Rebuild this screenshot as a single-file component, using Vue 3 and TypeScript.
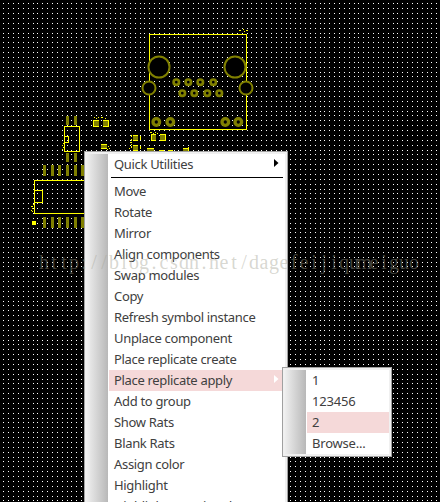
<script setup lang="ts">
interface MenuItem {
  label: string
  arrow?: boolean
  active?: boolean
  separated?: boolean
}

const items: MenuItem[] = [
  { label: 'Quick Utilities', arrow: true, separated: true },
  { label: 'Move' },
  { label: 'Rotate' },
  { label: 'Mirror' },
  { label: 'Align components' },
  { label: 'Swap modules' },
  { label: 'Copy' },
  { label: 'Refresh symbol instance' },
  { label: 'Unplace component' },
  { label: 'Place replicate create' },
  { label: 'Place replicate apply', arrow: true, active: true },
  { label: 'Add to group' },
  { label: 'Show Rats' },
  { label: 'Blank Rats' },
  { label: 'Assign color' },
  { label: 'Highlight' },
  { label: 'Highlight associated' },
]

const subItems: MenuItem[] = [
  { label: '1' },
  { label: '123456' },
  { label: '2', active: true },
  { label: 'Browse...' },
]

// Grid dots snap to whole pixels
const steps = (n: number, pitch: number) => Array.from({ length: n }, (_, i) => Math.floor(3.85 + i * pitch))
const xs = steps(90, 4.865)
const ys = steps(103, 4.873)
const dots = ys.map((y) => xs.map((x) => `M${x} ${y}h1v1h-1z`).join('')).join('')

const pins = [
  [176, 82], [188, 82], [200, 82], [213, 82],
  [182, 93], [194, 93], [207, 93], [219, 93],
]
const shieldPins = [[156, 122], [170, 122], [225, 122], [238, 122]]
const icPins = [43, 51, 58, 66, 74, 81]
const chips = [
  [93, 120, 6, 7], [103, 120, 6, 7], [151, 134, 5, 7], [160, 134, 6, 7],
  [133, 135, 5, 6], [133, 145, 5, 6], [101, 144, 6, 5], [147, 148, 7, 5], [183, 148, 6, 5],
]
const watermark = 'http://blog.csdn.net/dagefeijiqumeiguo'
const watermarkX = watermark.split('').map((_, i) => 44 + i * 10).join(' ')
</script>

<template>
  <main class="canvas">
    <svg class="board" width="440" height="502" viewBox="0 0 440 502">
      <path :d="dots" fill="#fff" shape-rendering="crispEdges" />
      <g fill="none" stroke="#ff0" shape-rendering="crispEdges">
        <rect x="149.5" y="34.5" width="97" height="95" />
        <path d="M64.5 126.5h15v25h-15zM65 136.500h3v6h-3M84 180.500H34.500v33H84M34.500 190.500h8v12h-8" />
      </g>
      <g fill="#000" stroke="#808000" stroke-width="2">
        <circle cx="159" cy="67" r="10.500" />
        <circle cx="235" cy="67" r="10.500" />
        <circle cx="149" cy="88" r="6.500" />
        <circle cx="246" cy="88" r="6.500" />
      </g>
      <g fill="#000" stroke="#808000">
        <circle v-for="p in pins" :key="p.join()" :cx="p[0] + 0.3" :cy="p[1] + 0.2" r="2.700" stroke-width="2.700" />
        <circle v-for="p in shieldPins" :key="p.join()" :cx="p[0] + 0.3" :cy="p[1]" r="3.300" stroke-width="3.300" />
      </g>
      <g fill="#808000" shape-rendering="crispEdges">
        <rect v-for="x in [66, 74]" :key="x" :x="x" y="116" width="3" height="9" />
        <rect v-for="x in [66, 74]" :key="x + 100" :x="x" y="153" width="3" height="9" />
        <rect v-for="x in icPins" :key="x" :x="x" y="165" width="3" height="11" />
        <rect v-for="x in icPins" :key="x + 100" :x="x" y="217" width="3" height="11" />
        <g v-for="c in chips" :key="c.join()">
          <rect :x="c[0]" :y="c[1]" :width="c[2]" :height="c[3]" />
          <path :d="`M${c[0]} ${c[1] + 0.5}h${c[2]}M${c[0]} ${c[1] + c[3] - 0.5}h${c[2]}`" stroke="#ff0" />
        </g>
      </g>
      <g fill="none" stroke="#ff0" shape-rendering="crispEdges">
        <path d="M93.500 120v7M108.500 120v7M151.500 134v7M165.500 134v7M140.500 136v4M140.500 146v3M131.500 135v2M131.500 139v2M131.500 146v2M159 150.500h5M168 150.500h5M188.500 147v4" />
        <path d="M239 30.500h2M243 29.500h1M244 31.500h1M246 30.500h2M94 117.500h1M96 118.500h1M98 117.500h1M101 117.500h2M105 118.500h1M150 132.500h2M153 133.500h1M155 132.500h1M157 133.500h1M108 146.500h1M109 148.500h1M107 149.500h1M130 142.500h2M131 144.500h1M129 148.500h1M63 143.500h1M62 145.500h1M63 147.500h1M62 149.500h1M33 204.500h1M31 206.500h2M32 208.500h1M31 210.500h1M32 211.500h1" />
      </g>
      <rect x="32" y="221" width="4" height="4" fill="#ff0" />
    </svg>

    <nav class="menu main-menu">
      <div class="gutter" />
      <ul class="list">
        <li v-for="item in items" :key="item.label" :class="{ separated: item.separated }">
          <div class="row" :class="{ active: item.active }">
            <span>{{ item.label }}</span>
            <svg v-if="item.arrow" class="arrow" width="5" height="8" viewBox="0 0 5 8"><path d="M0 0l4.500 4L0 8z" /></svg>
          </div>
        </li>
      </ul>
    </nav>

    <nav class="menu sub-menu">
      <div class="gutter" />
      <ul class="list">
        <li v-for="item in subItems" :key="item.label">
          <div class="row" :class="{ active: item.active }"><span>{{ item.label }}</span></div>
        </li>
      </ul>
    </nav>

    <svg class="watermark" width="440" height="40" viewBox="0 0 440 40">
      <text :x="watermarkX" y="29">{{ watermark }}</text>
    </svg>
  </main>
</template>

<style>
body {
  background: #000;
  overflow: hidden;
}
</style>

<style scoped>
.canvas {
  position: relative;
  width: 440px;
  height: 502px;
  overflow: hidden;
  background: #000;
  font-family: 'Noto Sans', sans-serif;
}
.board {
  display: block;
}
.menu {
  position: absolute;
  box-sizing: border-box;
  display: flex;
  padding: 2px;
  border: 1px solid #a0a0a0;
  background: #f0f0f0;
}
.main-menu {
  left: 84px;
  top: 151px;
  width: 204px;
  height: 380px;
}
.sub-menu {
  left: 282px;
  top: 367px;
  width: 110px;
  height: 90px;
}
.gutter {
  flex: 0 0 21px;
  background: linear-gradient(90deg, #eee, #b8b8b8);
}
.list {
  flex: 1;
  margin: 0;
  padding: 0 0 0 1px;
  list-style: none;
  background: #fff;
}
.row {
  display: flex;
  align-items: center;
  justify-content: space-between;
  height: 21px;
  padding: 0 5px;
  font-size: 13px;
  line-height: 21px;
  letter-spacing: -0.32px;
  color: #404040;
  white-space: nowrap;
}
.sub-menu .row {
  letter-spacing: -0.2px;
}
.row.active {
  background: #f5d9d9;
}
.separated {
  height: 27px;
}
.separated::after {
  content: '';
  display: block;
  height: 1px;
  margin: 2px 2px 0 2px;
  background: #000;
}
.arrow {
  margin: -4px 1px 0 0;
  fill: #000;
}
.active .arrow {
  fill: #fff;
}
.watermark {
  position: absolute;
  left: 0;
  top: 240px;
}
.watermark text {
  font-family: 'Liberation Serif', serif;
  font-size: 20px;
  text-anchor: middle;
  fill: rgba(160, 160, 145, 0.42);
}
</style>
